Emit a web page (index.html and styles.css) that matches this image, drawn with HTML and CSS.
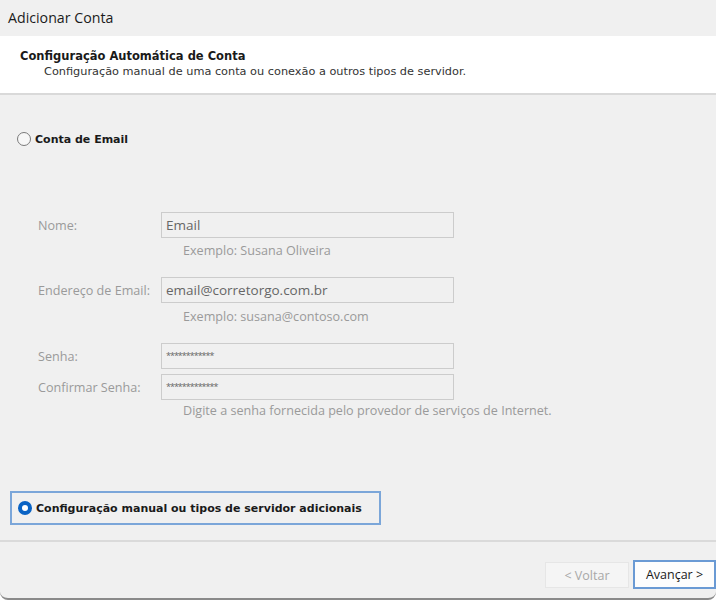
FILE: index.html
```html
<!DOCTYPE html>
<html lang="pt-BR">
<head>
  <meta charset="UTF-8" />
  <title>Adicionar Conta</title>
  <link rel="stylesheet" href="styles.css">
</head>
<body>
  <div class="window">
    <div class="titlebar">Adicionar Conta</div>

    <div class="header">
      <h1>Configuração Automática de Conta</h1>
      <p>Configuração manual de uma conta ou conexão a outros tipos de servidor.</p>
    </div>

    <div class="content">
      <div class="option">
        <span class="radio"></span>
        <span class="option-label">Conta de Email</span>
      </div>

      <div class="form">
        <div class="row">
          <label>Nome:</label>
          <div class="field">Email</div>
        </div>
        <div class="hint hint-first">Exemplo: Susana Oliveira</div>

        <div class="row row-gap">
          <label>Endereço de Email:</label>
          <div class="field">email@corretorgo.com.br</div>
        </div>
        <div class="hint">Exemplo: susana@contoso.com</div>

        <div class="row row-gap">
          <label>Senha:</label>
          <div class="field pass">************</div>
        </div>
        <div class="row row-tight">
          <label>Confirmar Senha:</label>
          <div class="field pass">*************</div>
        </div>
        <div class="hint hint-last">Digite a senha fornecida pelo provedor de serviços de Internet.</div>
      </div>

      <div class="option option-selected">
        <span class="radio checked"></span>
        <span class="option-label">Configuração manual ou tipos de servidor adicionais</span>
      </div>
    </div>

    <div class="footer">
      <button class="btn" disabled>&lt; Voltar</button>
      <button class="btn btn-default">Avançar &gt;</button>
    </div>
  </div>
</body>
</html>
```

FILE: styles.css
```css
body {
  margin: 0;
  background: #ffffff;
  font-family: "Open Sans", "Noto Sans", sans-serif;
}
.window {
  width: 716px;
  height: 600px;
  background: #f0f0f0;
  border-bottom: 2px solid #8a8a8a;
  border-radius: 0 0 8px 8px;
  box-sizing: border-box;
  display: flex;
  flex-direction: column;
  overflow: hidden;
}
.titlebar {
  height: 36px;
  line-height: 36px;
  padding-left: 8px;
  font-size: 14.2px;
  color: #1b1b1b;
}
.header {
  height: 57px;
  background: #ffffff;
  border-bottom: 2px solid #d9d9d9;
  padding-left: 20px;
  font-family: "DejaVu Sans", sans-serif;
}
.header h1 {
  margin: 13px 0 0;
  font-size: 11.5px;
  font-weight: bold;
  color: #1a1a1a;
  line-height: 14px;
}
.header p {
  margin: 2px 0 0 24px;
  font-size: 11.3px;
  color: #333333;
  line-height: 14px;
}
.content {
  flex: 1;
  border-bottom: 2px solid #dadada;
}
.option {
  display: flex;
  align-items: center;
  height: 16px;
  margin: 36px 0 0 17px;
}
.radio {
  width: 14px;
  height: 14px;
  border: 1px solid #7a7a7a;
  border-radius: 50%;
  background: #f7f7f7;
  box-sizing: border-box;
  margin-right: 4px;
}
.radio.checked {
  border: 4px solid #0a63c4;
  background: #ffffff;
}
.option-label {
  font-family: "DejaVu Sans", sans-serif;
  font-weight: bold;
  font-size: 11px;
  color: #1a1a1a;
}
.option-selected {
  width: 371px;
  height: 34px;
  margin: 73px 0 0 10px;
  padding-left: 6px;
  border: 2px solid #7ba6d9;
  box-sizing: border-box;
}
.form {
  margin: 65px 0 0 38px;
  font-size: 12.6px;
  color: #9a9a9a;
}
.row {
  display: flex;
  align-items: center;
  height: 26px;
}
.row label {
  width: 123px;
}
.row-gap {
  margin-top: 19px;
}
.row-tight {
  margin-top: 5px;
}
.field {
  width: 293px;
  height: 26px;
  border: 1px solid #cccccc;
  box-sizing: border-box;
  padding-left: 4px;
  line-height: 24px;
  font-size: 13.5px;
  color: #666666;
  background: #f0f0f0;
}
.pass {
  font-size: 9px;
  letter-spacing: -1px;
}
.hint {
  margin: 7px 0 0 145px;
  height: 14px;
  line-height: 14px;
}
.hint-first {
  margin-top: 6px;
}
.hint-last {
  margin-top: 4px;
}
.footer {
  height: 56px;
  display: flex;
  justify-content: flex-end;
  align-items: flex-start;
  padding-top: 18px;
  box-sizing: border-box;
}
.btn {
  font-family: "Open Sans", "Noto Sans", sans-serif;
  font-size: 12.5px;
  height: 26px;
  width: 84px;
  margin-top: 2px;
  margin-right: 4px;
  background: #f5f5f5;
  border: 1px solid #e6e6e6;
  color: #a8a8a8;
}
.btn-default {
  width: 83px;
  height: 29px;
  margin: 0;
  background: #fdfdfd;
  border: 2px solid #6a9ad4;
  color: #1a1a1a;
}
```
